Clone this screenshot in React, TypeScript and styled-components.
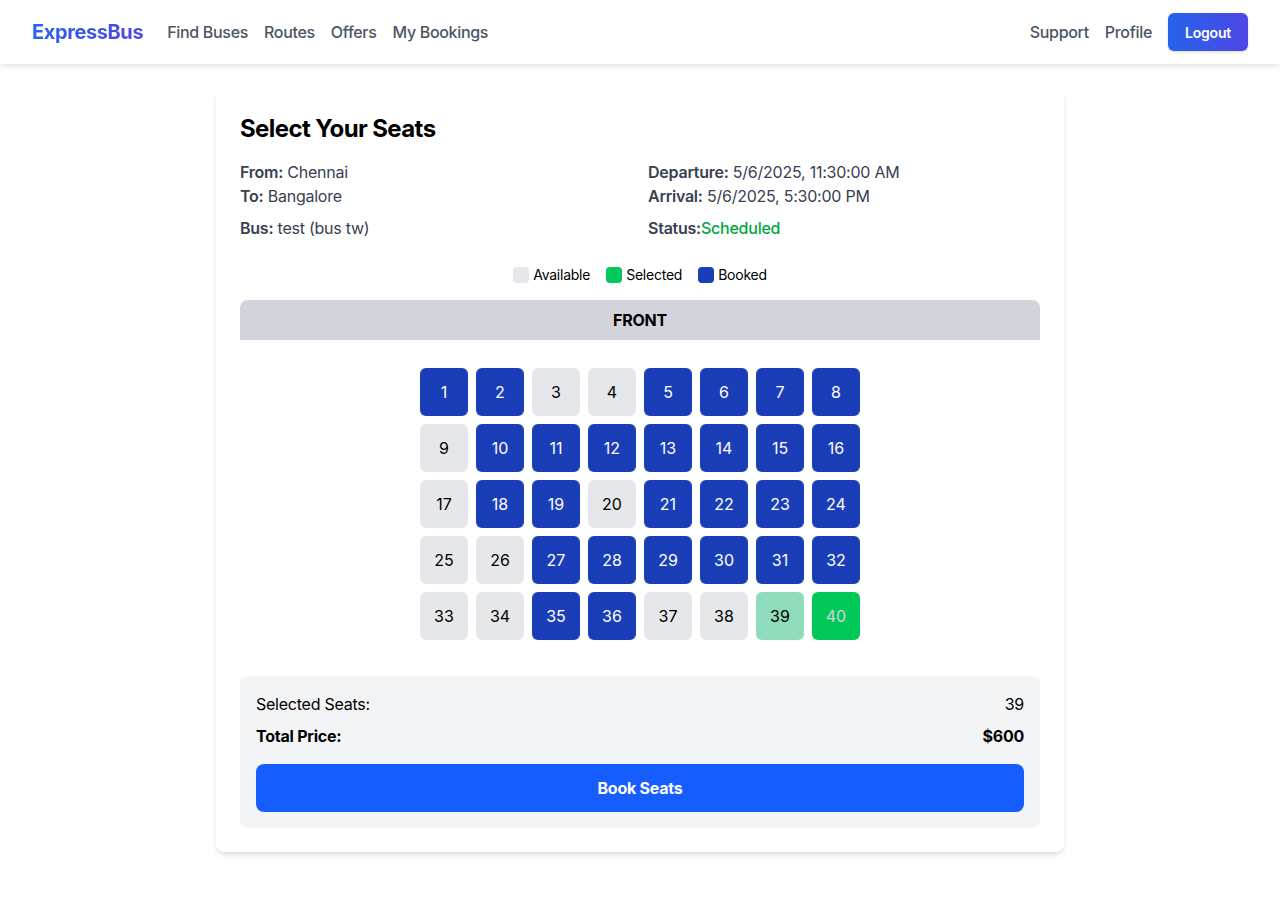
import React, { useState } from "react";
import styled, { createGlobalStyle } from "styled-components";

const GlobalStyle = createGlobalStyle`
	* {
		box-sizing: border-box;
	}
	body {
		margin: 0;
		font-family: Inter, "Noto Sans", "Liberation Sans", sans-serif;
		letter-spacing: -0.015em;
		background: #ffffff;
		color: #111827;
	}
	p {
		margin: 0;
	}
`;

type SeatState = "available" | "booked" | "selected" | "picked";

const booked = new Set([
	1, 2, 5, 6, 7, 8, 10, 11, 12, 13, 14, 15, 16, 18, 19, 21, 22, 23, 24, 27, 28, 29, 30, 31, 32, 35, 36,
]);

const App: React.FC = () => {
	const [picked, setPicked] = useState<number[]>([39]);

	const seatState = (n: number): SeatState => {
		if (booked.has(n)) return "booked";
		if (n === 40) return "selected";
		if (picked.includes(n)) return "picked";
		return "available";
	};

	const toggleSeat = (n: number) => {
		if (booked.has(n)) return;
		setPicked((prev) => (prev.includes(n) ? prev.filter((s) => s !== n) : [...prev, n]));
	};

	const seats = Array.from({ length: 40 }, (_, i) => i + 1);

	return (
		<>
			<GlobalStyle />
			<NavBar>
				<NavLeft>
					<Logo>ExpressBus</Logo>
					<NavLinks>
						<NavLink>Find Buses</NavLink>
						<NavLink>Routes</NavLink>
						<NavLink>Offers</NavLink>
						<NavLink>My Bookings</NavLink>
					</NavLinks>
				</NavLeft>
				<NavLinks>
					<NavLink>Support</NavLink>
					<NavLink>Profile</NavLink>
					<LogoutButton>Logout</LogoutButton>
				</NavLinks>
			</NavBar>

			<Main>
				<Card>
					<Title>Select Your Seats</Title>
					<InfoGrid>
						<div>
							<InfoLine>
								<b>From:</b> Chennai
							</InfoLine>
							<InfoLine>
								<b>To:</b> Bangalore
							</InfoLine>
						</div>
						<div>
							<InfoLine>
								<b>Departure:</b> 5/6/2025, 11:30:00 AM
							</InfoLine>
							<InfoLine>
								<b>Arrival:</b> 5/6/2025, 5:30:00 PM
							</InfoLine>
						</div>
						<InfoLine>
							<b>Bus:</b> test (bus tw)
						</InfoLine>
						<InfoLine>
							<b>Status:</b>
							<StatusText>Scheduled</StatusText>
						</InfoLine>
					</InfoGrid>

					<Legend>
						<LegendItem>
							<Swatch $color="#e5e7eb" /> Available
						</LegendItem>
						<LegendItem>
							<Swatch $color="#00c95a" /> Selected
						</LegendItem>
						<LegendItem>
							<Swatch $color="#1a3db8" /> Booked
						</LegendItem>
					</Legend>

					<FrontBar>FRONT</FrontBar>

					<SeatGrid>
						{seats.map((n) => (
							<Seat key={n} $state={seatState(n)} onClick={() => toggleSeat(n)}>
								{n}
							</Seat>
						))}
					</SeatGrid>

					<Summary>
						<SummaryRow>
							<span>Selected Seats:</span>
							<span>{picked.join(", ")}</span>
						</SummaryRow>
						<SummaryRow $bold>
							<span>Total Price:</span>
							<span>$600</span>
						</SummaryRow>
						<BookButton>Book Seats</BookButton>
					</Summary>
				</Card>
			</Main>
		</>
	);
};

export default App;

const NavBar = styled.header`
	height: 64px;
	padding: 0 32px;
	display: flex;
	align-items: center;
	justify-content: space-between;
	background: #ffffff;
	box-shadow: 0 2px 6px rgba(0, 0, 0, 0.12);
	position: relative;
	z-index: 1;
`;

const NavLeft = styled.div`
	display: flex;
	align-items: center;
	gap: 24px;
`;

const Logo = styled.div`
	font-size: 20px;
	font-weight: 700;
	line-height: 28px;
	letter-spacing: -0.02em;
	background: linear-gradient(to right, #2563eb, #4f46e5);
	-webkit-background-clip: text;
	background-clip: text;
	color: transparent;
`;

const NavLinks = styled.nav`
	display: flex;
	align-items: center;
	gap: 16px;
`;

const NavLink = styled.a`
	font-size: 16px;
	line-height: 24px;
	letter-spacing: -0.02em;
	color: #4b5563;
	font-weight: 500;
	cursor: pointer;
`;

const LogoutButton = styled.button`
	height: 38px;
	width: 80px;
	border: none;
	border-radius: 6px;
	background: linear-gradient(to right, #2563eb, #4f46e5);
	color: #ffffff;
	font-family: inherit;
	font-size: 14px;
	font-weight: 600;
	letter-spacing: -0.015em;
	box-shadow: 0 1px 3px rgba(0, 0, 0, 0.15);
	cursor: pointer;
`;

const Main = styled.main`
	display: flex;
	justify-content: center;
	padding: 24px 0 56px;
`;

const Card = styled.section`
	width: 848px;
	padding: 24px;
	background: #ffffff;
	border-radius: 8px;
	box-shadow: 0 4px 6px -1px rgba(0, 0, 0, 0.1), 0 2px 4px -2px rgba(0, 0, 0, 0.1);
`;

const Title = styled.h2`
	margin: 0 0 14px;
	font-size: 24px;
	line-height: 34px;
	font-weight: 700;
	letter-spacing: -0.025em;
	color: #000000;
`;

const InfoGrid = styled.div`
	display: grid;
	grid-template-columns: 1fr 1fr;
	column-gap: 16px;
	row-gap: 8px;
	color: #374151;
	font-size: 16px;
	line-height: 24px;

	b {
		font-weight: 600;
	}
`;

const InfoLine = styled.p``;

const StatusText = styled.span`
	color: #00a63e;
	font-weight: 500;
`;

const Legend = styled.div`
	margin: 25px 0 15px;
	display: flex;
	justify-content: center;
	gap: 16px;
	font-size: 14px;
	line-height: 20px;
	color: #000000;
`;

const LegendItem = styled.div`
	display: flex;
	align-items: center;
	gap: 4px;
`;

const Swatch = styled.span<{ $color: string }>`
	width: 16px;
	height: 16px;
	border-radius: 4px;
	background: ${(p) => p.$color};
`;

const FrontBar = styled.div`
	height: 40px;
	display: flex;
	align-items: center;
	justify-content: center;
	background: #d1d5db;
	border-radius: 8px 8px 0 0;
	font-size: 16px;
	font-weight: 700;
	color: #000000;
`;

const SeatGrid = styled.div`
	margin: 28px auto 36px;
	width: 440px;
	display: grid;
	grid-template-columns: repeat(8, 48px);
	gap: 8px;
`;

const seatColors: Record<SeatState, { bg: string; fg: string }> = {
	available: { bg: "#e5e7eb", fg: "#000000" },
	booked: { bg: "#1a3db8", fg: "#ffffff" },
	selected: { bg: "#00c95a", fg: "#d4d4d8" },
	picked: { bg: "#8fdbbc", fg: "#000000" },
};

const Seat = styled.button<{ $state: SeatState }>`
	width: 48px;
	height: 48px;
	border: none;
	border-radius: 6px;
	padding: 0;
	display: flex;
	align-items: center;
	justify-content: center;
	font-family: inherit;
	font-size: 16px;
	background: ${(p) => seatColors[p.$state].bg};
	color: ${(p) => seatColors[p.$state].fg};
	cursor: ${(p) => (p.$state === "booked" ? "not-allowed" : "pointer")};
`;

const Summary = styled.div`
	padding: 16px;
	background: #f3f4f6;
	border-radius: 8px;
	display: flex;
	flex-direction: column;
	gap: 8px;
`;

const SummaryRow = styled.div<{ $bold?: boolean }>`
	display: flex;
	justify-content: space-between;
	font-size: 16px;
	line-height: 24px;
	color: #000000;
	font-weight: ${(p) => (p.$bold ? 700 : 400)};
`;

const BookButton = styled.button`
	margin-top: 8px;
	height: 48px;
	border: none;
	border-radius: 8px;
	background: #165dff;
	color: #ffffff;
	font-family: inherit;
	font-size: 16px;
	font-weight: 700;
	letter-spacing: -0.015em;
	cursor: pointer;
`;
